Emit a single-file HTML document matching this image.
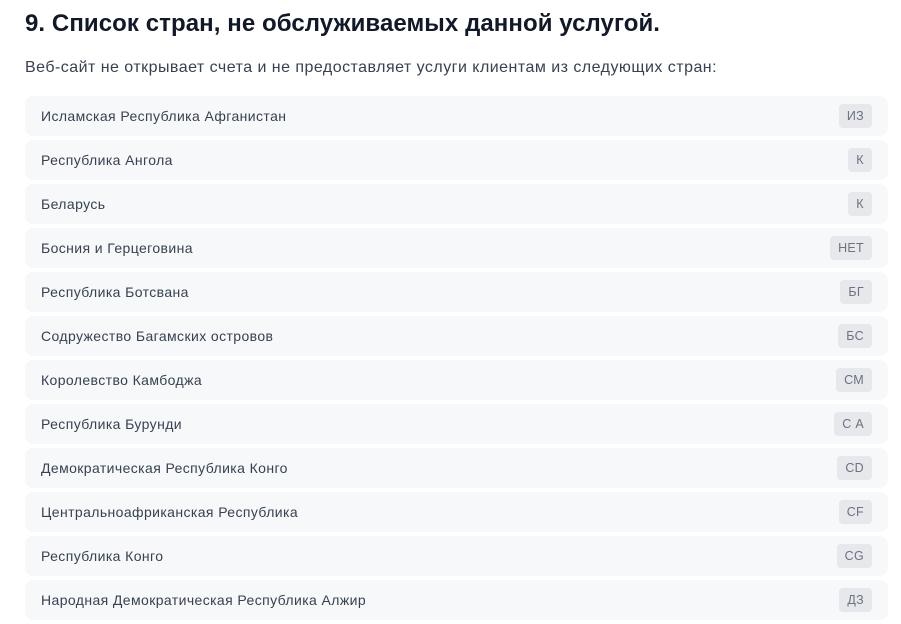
<!DOCTYPE html>
<html><head><meta charset="utf-8"><style>
body{margin:0;background:#fff;font-family:"Liberation Sans",sans-serif;width:901px;height:616px;overflow:hidden}
h2{position:absolute;left:25px;top:8px;margin:0;font-size:24px;font-weight:bold;color:#111827;line-height:32px;letter-spacing:0.08px}
p{position:absolute;left:25px;top:57px;margin:0;font-size:16px;color:#374151;line-height:22px;letter-spacing:0.47px}
.list{position:absolute;left:25px;top:96px;width:863px}
.row{height:40px;margin-bottom:4px;background:#f7f8fa;border-radius:8px;display:flex;align-items:center;justify-content:space-between;padding:0 16px;box-sizing:border-box;font-size:14px;color:#374151;letter-spacing:0.4px}
.b{background:#e6e8eb;border-radius:4px;height:24px;min-width:24px;padding:0 8px;box-sizing:border-box;font-size:12.5px;color:#6b7280;display:flex;align-items:center;justify-content:center;letter-spacing:0.3px}
</style></head><body>
<h2>9. Список стран, не обслуживаемых данной услугой.</h2>
<p>Веб-сайт не открывает счета и не предоставляет услуги клиентам из следующих стран:</p>
<div class="list">
<div class="row"><span>Исламская Республика Афганистан</span><span class="b">ИЗ</span></div>
<div class="row"><span>Республика Ангола</span><span class="b">К</span></div>
<div class="row"><span>Беларусь</span><span class="b">К</span></div>
<div class="row"><span>Босния и Герцеговина</span><span class="b">НЕТ</span></div>
<div class="row"><span>Республика Ботсвана</span><span class="b">БГ</span></div>
<div class="row"><span>Содружество Багамских островов</span><span class="b">БС</span></div>
<div class="row"><span>Королевство Камбоджа</span><span class="b">СМ</span></div>
<div class="row"><span>Республика Бурунди</span><span class="b">С А</span></div>
<div class="row"><span>Демократическая Республика Конго</span><span class="b">CD</span></div>
<div class="row"><span>Центральноафриканская Республика</span><span class="b">CF</span></div>
<div class="row"><span>Республика Конго</span><span class="b">CG</span></div>
<div class="row"><span>Народная Демократическая Республика Алжир</span><span class="b">ДЗ</span></div>
</div>
</body></html>
